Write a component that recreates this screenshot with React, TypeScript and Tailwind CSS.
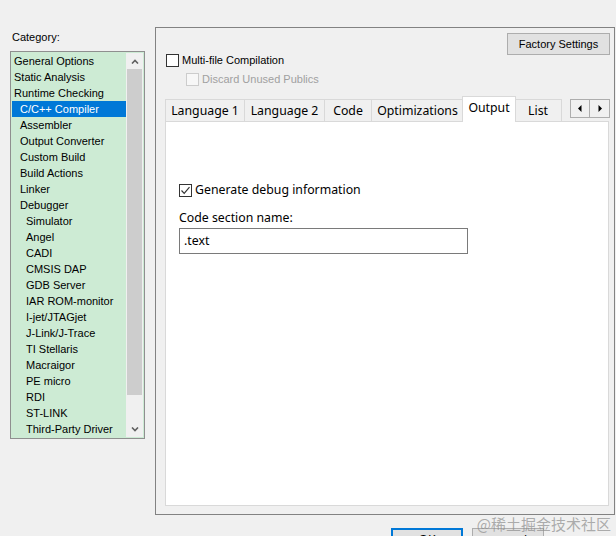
import React from "react";

const categories: { label: string; level: number }[] = [
  { label: "General Options", level: 0 },
  { label: "Static Analysis", level: 0 },
  { label: "Runtime Checking", level: 0 },
  { label: "C/C++ Compiler", level: 1 },
  { label: "Assembler", level: 1 },
  { label: "Output Converter", level: 1 },
  { label: "Custom Build", level: 1 },
  { label: "Build Actions", level: 1 },
  { label: "Linker", level: 1 },
  { label: "Debugger", level: 1 },
  { label: "Simulator", level: 2 },
  { label: "Angel", level: 2 },
  { label: "CADI", level: 2 },
  { label: "CMSIS DAP", level: 2 },
  { label: "GDB Server", level: 2 },
  { label: "IAR ROM-monitor", level: 2 },
  { label: "I-jet/JTAGjet", level: 2 },
  { label: "J-Link/J-Trace", level: 2 },
  { label: "TI Stellaris", level: 2 },
  { label: "Macraigor", level: 2 },
  { label: "PE micro", level: 2 },
  { label: "RDI", level: 2 },
  { label: "ST-LINK", level: 2 },
  { label: "Third-Party Driver", level: 2 },
];

const tabs = [
  { label: "Language 1", w: "w-[80px]" },
  { label: "Language 2", w: "w-[80px]" },
  { label: "Code", w: "w-[47px]" },
  { label: "Optimizations", w: "w-[92px]" },
  { label: "Output", w: "w-[54px]", active: true },
  { label: "List", w: "w-[48px]" },
];

const indent = ["pl-[2px]", "pl-[8px]", "pl-[14px]"];

function Checkbox({ checked, disabled }: { checked?: boolean; disabled?: boolean }) {
  return (
    <span
      className={`flex h-[13px] w-[13px] shrink-0 items-center justify-center border ${
        disabled ? "border-[#cccccc] bg-[#f7f7f7]" : "border-[#333333] bg-white"
      }`}
    >
      {checked && (
        <svg width="11" height="11" viewBox="0 0 11 11">
          <path d="M1.5 5.5 L4.2 8.3 L9.5 2.2" fill="none" stroke="#333" strokeWidth="1.2" />
        </svg>
      )}
    </span>
  );
}

export default function App() {
  const sys = { fontFamily: '"Liberation Sans", Arial, sans-serif' };
  const ui = { fontFamily: '"Noto Sans", "Open Sans", sans-serif' };

  return (
    <div className="relative h-[536px] w-[616px] overflow-hidden bg-[#f0f0f0] text-black" style={sys}>
      <div className="flex pt-[27px]">
        {/* Category column */}
        <div className="ml-[10px] flex w-[135px] flex-col">
          <div className="mt-[2px] pl-[2px] text-[11px] leading-[16px]">Category:</div>
          <div className="mt-[6px] flex border border-[#8f8f8f] bg-[#cdebd4] p-px">
            <div className="flex-1">
              {categories.map((c) => (
                <div
                  key={c.label}
                  className={`h-[16px] whitespace-nowrap text-[11px] leading-[16px] ${indent[c.level]} ${
                    c.label === "C/C++ Compiler" ? "bg-[#0078d7] text-white" : ""
                  }`}
                >
                  {c.label}
                </div>
              ))}
            </div>
            {/* scrollbar */}
            <div className="flex w-[17px] flex-col bg-[#f0f0f0]">
              <div className="flex h-[16px] items-center justify-center">
                <svg width="8" height="5" viewBox="0 0 8 5">
                  <path d="M1 4.5 L4 1.5 L7 4.5" fill="none" stroke="#606060" strokeWidth="1.6" />
                </svg>
              </div>
              <div className="mx-px h-[326px] bg-[#cdcdcd]" />
              <div className="flex-1" />
              <div className="flex h-[16px] items-center justify-center">
                <svg width="8" height="5" viewBox="0 0 8 5">
                  <path d="M1 0.5 L4 3.5 L7 0.5" fill="none" stroke="#606060" strokeWidth="1.6" />
                </svg>
              </div>
            </div>
          </div>
        </div>

        {/* Options panel */}
        <div className="ml-[10px] flex h-[488px] w-[460px] flex-col border border-[#828282]">
          <div className="flex items-start">
            <div className="flex flex-col pl-[10px] pt-[24px]">
              <div className="flex h-[16px] items-center gap-[3px]">
                <Checkbox />
                <span className="text-[11px] leading-[16px]">Multi-file Compilation</span>
              </div>
              <div className="mt-[3px] flex h-[16px] items-center gap-[3px] pl-[20px]">
                <Checkbox disabled />
                <span className="text-[11px] leading-[16px] text-[#a0a0a0]">Discard Unused Publics</span>
              </div>
            </div>
            <button className="ml-auto mr-[4px] mt-[5px] h-[22px] w-[103px] border border-[#adadad] bg-[#e1e1e1] text-[11px]">
              Factory Settings
            </button>
          </div>

          {/* Tab strip */}
          <div className="ml-[9px] mr-[4px] mt-[9px] flex h-[25px] items-end" style={ui}>
            {tabs.map((t) =>
              t.active ? (
                <div
                  key={t.label}
                  className={`relative z-10 -mb-px -mx-[2px] flex h-[26px] ${t.w} items-start justify-center border border-b-0 border-[#d9d9d9] bg-white pt-[2px] text-[12.3px] leading-[18px]`}
                >
                  {t.label}
                </div>
              ) : (
                <div
                  key={t.label}
                  className={`flex h-[22px] ${t.w} shrink-0 items-center justify-center border border-b-0 border-[#d9d9d9] bg-[#f0f0f0] text-[12.3px] leading-[18px] [&+&]:border-l-0`}
                >
                  {t.label}
                </div>
              )
            )}
            <div className="mb-[3px] ml-auto flex h-[19px]">
              <div className="flex w-[20px] items-center justify-center border border-[#adadad] bg-[#f0f0f0]">
                <svg width="4" height="7" viewBox="0 0 4 7">
                  <path d="M3.5 0 L0 3.5 L3.5 7 Z" fill="#000" />
                </svg>
              </div>
              <div className="flex w-[20px] items-center justify-center border border-l-0 border-[#adadad] bg-[#f0f0f0]">
                <svg width="4" height="7" viewBox="0 0 4 7">
                  <path d="M0.5 0 L4 3.5 L0.5 7 Z" fill="#000" />
                </svg>
              </div>
            </div>
          </div>

          {/* Tab page */}
          <div className="ml-[9px] mr-[5px] flex h-[385px] flex-col border border-[#d9d9d9] bg-white pl-[13px]" style={ui}>
            <div className="mt-[59px] flex h-[18px] items-center gap-[3px]">
              <Checkbox checked />
              <span className="text-[12.3px] leading-[18px]">Generate debug information</span>
            </div>
            <div className="mt-[10px] text-[12.3px] leading-[18px]">Code section name:</div>
            <div className="mt-[1px] flex h-[26px] w-[289px] items-center border border-[#7a7a7a] bg-white pl-[4px] text-[12.3px]">
              .text
            </div>
          </div>
        </div>
      </div>

      {/* Dialog buttons */}
      <div className="mt-[13px] flex gap-[9px] pl-[391px]" style={ui}>
        <button className="h-[23px] w-[72px] border-2 border-[#0078d7] bg-[#e1e1e1] pt-[1px] text-[12.3px] leading-[16px]">
          OK
        </button>
        <button className="h-[23px] w-[72px] border border-[#adadad] bg-[#e1e1e1] pt-[2px] text-[12.3px] leading-[16px]">
          Cancel
        </button>
      </div>

      {/* watermark */}
      <div
        className="absolute right-[5px] top-[515px] text-[15px] leading-[18px] text-[#8c8c8c]/70"
        style={{ fontFamily: '"Noto Sans CJK SC", "Noto Sans", sans-serif' }}
      >
        @稀土掘金技术社区
      </div>
    </div>
  );
}
